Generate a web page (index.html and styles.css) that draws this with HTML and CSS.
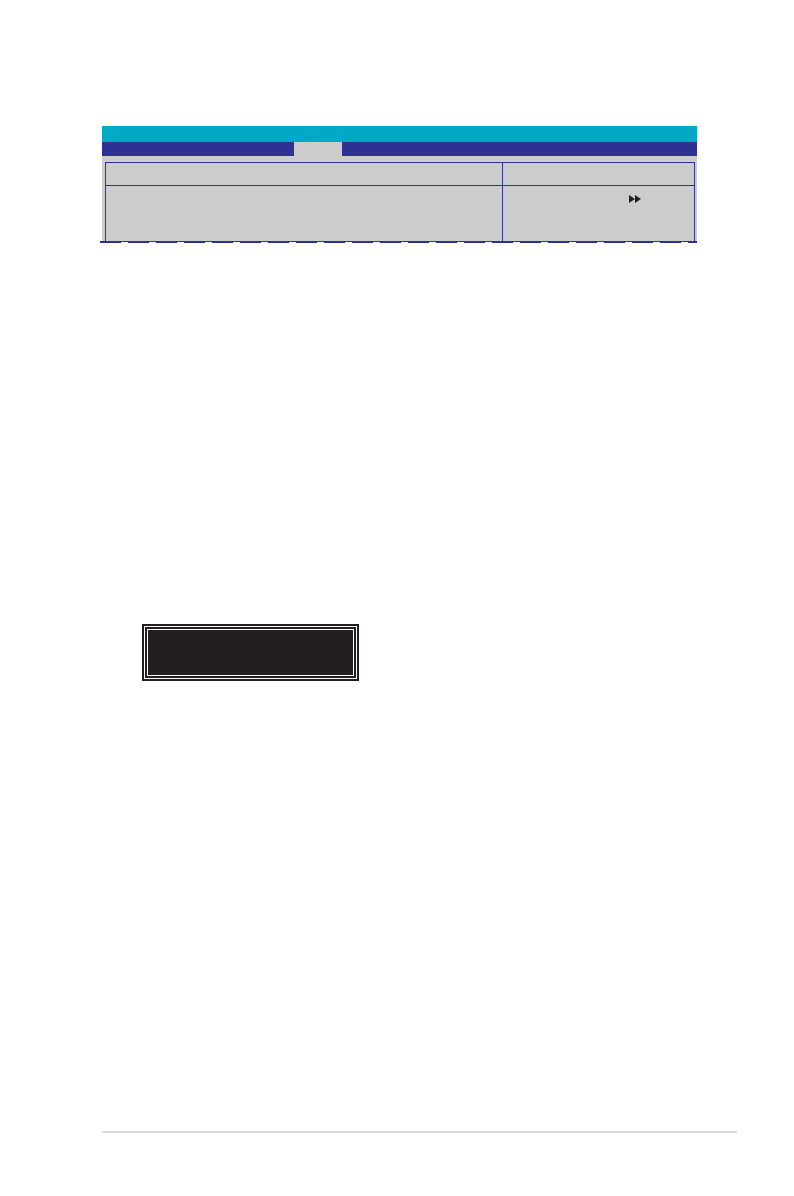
FILE: index.html
```
<!DOCTYPE html>
<html>
<head>
<meta charset="utf-8">
<link rel="stylesheet" href="styles.css">
</head>
<body>
<div class="page">
  <div class="bios">
    <div class="title-bar"></div>
    <div class="menu-bar"><div class="tab"></div></div>
    <div class="panel">
      <div class="grid">
        <div class="cell head left"></div>
        <div class="cell head right"></div>
        <div class="cell main left"></div>
        <div class="cell main right">
          <svg class="arrows" width="13" height="8" viewBox="0 0 13 8"><polygon points="0,0 6,4 0,8" fill="#231f20"/><polygon points="6,0 12,4 6,8" fill="#231f20"/></svg>
        </div>
      </div>
    </div>
    <div class="dash"></div>
  </div>
  <div class="black-box"><div class="inner"></div></div>
  <div class="footer-line"></div>
</div>
</body>
</html>
```
FILE: styles.css
```
html, body {
  margin: 0;
  padding: 0;
  background: #ffffff;
  font-family: "Liberation Sans", Arial, sans-serif;
}
.page {
  width: 794px;
  height: 1196px;
  position: relative;
  overflow: hidden;
}
.bios {
  margin: 126px 0 0 102px;
  width: 595px;
}
.title-bar {
  height: 16px;
  background: #00aac7;
}
.menu-bar {
  height: 14px;
  background: #2e3192;
  display: flex;
  padding-left: 192px;
}
.tab {
  width: 48px;
  height: 14px;
  background: #cccccc;
}
.panel {
  background: #cccccc;
  padding: 6px 2px 0 3px;
  height: 79px;
}
.grid {
  display: grid;
  grid-template-columns: 397px 191px;
  grid-template-rows: 23px 55px;
  border-top: 1px solid #2e3192;
  border-left: 1px solid #2e3192;
  border-right: 1px solid #2e3192;
  height: 79px;
  box-sizing: border-box;
}
.cell.left {
  border-right: 1px solid #2e3192;
}
.cell.head {
  border-bottom: 1px solid #2e3192;
}
.cell.main.right {
  padding: 9px 0 0 126px;
  box-sizing: border-box;
}
.arrows {
  display: block;
}
.dash {
  margin-left: -2px;
  width: 597px;
  height: 2px;
  background: repeating-linear-gradient(to right, #2e3192 0, #2e3192 21px, #ffffff 21px, #ffffff 28px);
  box-shadow: inset 0 1px 0 #2e3192;
}
.black-box {
  margin: 381px 0 0 142px;
  width: 217px;
  height: 57px;
  box-sizing: border-box;
  background: #231f20;
  padding: 2px;
}
.inner {
  box-sizing: border-box;
  border: 1px solid #ffffff;
  outline: 1px solid #ffffff;
  outline-offset: 2px;
  margin: 3px;
  height: calc(100% - 6px);
}
.footer-line {
  margin: 450px 0 0 102px;
  width: 635px;
  height: 2px;
  background: #d9d9d9;
}
```
